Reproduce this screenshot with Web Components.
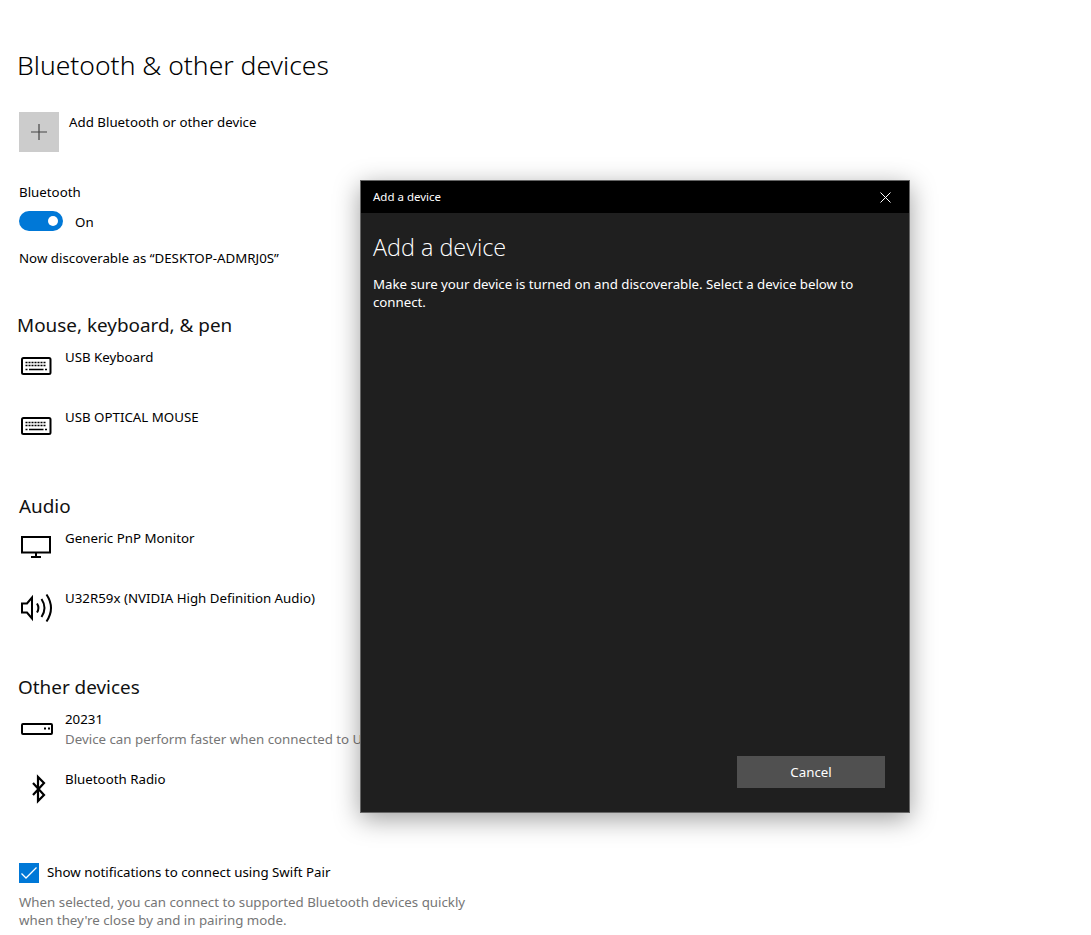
<!DOCTYPE html>
<html lang="en"><head><meta charset="utf-8"><title>Bluetooth &amp; other devices</title>
<style>
html,body{margin:0;background:#fff}
body{width:1091px;height:935px;overflow:hidden;position:relative;font:13.3px/20px "Noto Sans","Open Sans",sans-serif;color:#000}
</style></head>
<body>
<settings-page>
  <page-title>Bluetooth &amp; other devices</page-title>
  <add-device>Add Bluetooth or other device</add-device>
  <bt-toggle></bt-toggle>
  <device-section label="Mouse, keyboard, &amp; pen" inset="17">
    <device-row icon="keyboard">USB Keyboard</device-row>
    <device-row icon="keyboard">USB OPTICAL MOUSE</device-row>
  </device-section>
  <device-section label="Audio" inset="19">
    <device-row icon="monitor">Generic PnP Monitor</device-row>
    <device-row icon="speaker">U32R59x (NVIDIA High Definition Audio)</device-row>
  </device-section>
  <device-section label="Other devices" inset="18">
    <device-row icon="drive" note="Device can perform faster when connected to USB 3.0">20231</device-row>
    <device-row icon="bluetooth">Bluetooth Radio</device-row>
  </device-section>
  <swift-pair></swift-pair>
</settings-page>
<add-dialog></add-dialog>
<script>
function el(name, css, html, extra){
  const t=document.createElement('template');
  t.innerHTML='<style>'+css+'</style>'+html;
  customElements.define(name, class extends HTMLElement{
    constructor(){super();this.attachShadow({mode:'open'}).appendChild(t.content.cloneNode(true));}
    connectedCallback(){ if(extra) extra.call(this,this.shadowRoot); }
  });
}
el('settings-page',':host{display:flex;flex-direction:column;padding-top:48px}','<slot></slot>');
el('page-title',':host{display:block;padding-left:17px;height:34px;font:300 26.5px/34px "Noto Sans",sans-serif;color:#000}','<slot></slot>');
el('add-device',`:host{display:flex;gap:10px;margin:30px 0 0 19px;height:40px}
.b{width:40px;height:40px;background:#ccc;display:flex;align-items:center;justify-content:center}
.t{line-height:20px}`,
`<div class="b"><svg width="16" height="16" viewBox="0 0 16 16"><path d="M8 0v16M0 8h16" stroke="#444" stroke-width="1.2" fill="none"/></svg></div><div class="t"><slot></slot></div>`);
el('bt-toggle',`:host{display:block;margin-top:30px;padding:0 0 18px 19px}
.l{height:20px}
.r{display:flex;align-items:center;gap:12px;margin-top:9px;height:20px}
.r span{position:relative;top:1px}
.s{width:44px;height:20px;border-radius:10px;background:#0078d7;position:relative}
.s i{position:absolute;right:5px;top:5px;width:10px;height:10px;border-radius:50%;background:#fff}
.d{margin-top:17px;height:20px}`,
`<div class="l">Bluetooth</div><div class="r"><div class="s"><i></i></div><span>On</span></div><div class="d">Now discoverable as “DESKTOP-ADMRJ0S”</div>`);
el('device-section',`:host{display:block;margin-top:23px;height:158px}
.h{font:400 18.9px/32px "Noto Sans",sans-serif;height:32px;margin-bottom:6px;color:#111}`,
`<div class="h"></div><slot></slot>`,
function(r){const h=r.querySelector('.h');h.textContent=this.getAttribute('label');h.style.paddingLeft=this.getAttribute('inset')+'px';});
const ICONS={
keyboard:`<rect x="3" y="11" width="28.5" height="16" rx="1.5" fill="none" stroke="#000" stroke-width="2"/>
<path d="M6.5 15.500h21M6.5 18.500h21" stroke="#000" stroke-width="1.600" stroke-dasharray="2 1" fill="none"/><path d="M6.5 22.500h2M10 22.500h14.500M26 22.500h2" stroke="#000" stroke-width="1.600" fill="none"/>`,
monitor:`<rect x="3" y="9" width="28" height="15.500" fill="none" stroke="#000" stroke-width="2"/><path d="M17 25v3M12 29h10" stroke="#000" stroke-width="2" fill="none"/>`,
speaker:`<path d="M3 15.500h5L13 9.500v21L8 24.500H3z" fill="none" stroke="#000" stroke-width="2"/><path d="M18 15.500q2.800 4.500 0 9M22.500 11q6 9 0 18M27.500 6.500q9 13.500 0 27" fill="none" stroke="#000" stroke-width="2"/>`,
drive:`<rect x="3" y="15" width="30" height="10" rx="1" fill="none" stroke="#000" stroke-width="2"/><path d="M25 19.500h2M29 19.500h2" stroke="#000" stroke-width="2" fill="none"/>`,
bluetooth:`<path d="M14 14l11 12-6 6V8l6 6-11 12" fill="none" stroke="#000" stroke-width="2.200"/>`
};
el('device-row',`:host{display:flex;height:60px;padding-left:19px}
svg{width:46px;height:40px;flex:none;display:block}
.n{height:20px}.s{color:#767676;white-space:nowrap;height:20px}`,
`<svg viewBox="0 0 46 40"></svg><div><div class="n"><slot></slot></div><div class="s"></div></div>`,
function(r){r.querySelector('svg').innerHTML=ICONS[this.getAttribute('icon')];r.querySelector('.s').textContent=this.getAttribute('note')||'';});
el('swift-pair',`:host{display:block;margin-top:34px;padding-left:19px}
.c{display:flex;gap:8px;height:20px;line-height:18px}
.b{width:20px;height:20px;background:#0078d7;display:block}
p{margin:10px 0 0;color:#767676;line-height:18px;width:452px}`,
`<div class="c"><svg class="b" viewBox="0 0 20 20"><path d="M2.500 10.500l4.500 4.500L17.500 4.500" fill="none" stroke="#fff" stroke-width="1.300"/></svg><span>Show notifications to connect using Swift Pair</span></div><p>When selected, you can connect to supported Bluetooth devices quickly when they're close by and in pairing mode.</p>`);
el('add-dialog',`:host{position:absolute;left:360px;top:180px;width:548px;height:631px;border:1px solid #666;background:#1f1f1f;color:#fff;display:flex;flex-direction:column;box-shadow:0 6px 24px rgba(0,0,0,.38)}
.bar{height:32px;background:#000;display:flex;align-items:center;justify-content:space-between;padding:0 18px 0 12px;font-size:11.500px}
.body{flex:1;padding:16px 24px 24px 12px;display:flex;flex-direction:column}
h1{margin:0;font:300 23.400px/36px "Open Sans",sans-serif}
p{margin:10px 0 0;line-height:18px;width:490px;letter-spacing:-.03px}
.f{margin-top:auto;display:flex;justify-content:flex-end}
button{width:148px;height:32px;background:#505050;color:#fff;border:0;font:13.300px "Noto Sans",sans-serif;padding:0}`,
`<div class="bar"><span>Add a device</span><svg width="11" height="11" viewBox="0 0 11 11"><path d="M.5.500l10 10M10.500.500l-10 10" stroke="#fff" fill="none"/></svg></div>
<div class="body"><h1>Add a device</h1><p>Make sure your device is turned on and discoverable. Select a device below to connect.</p><div class="f"><button>Cancel</button></div></div>`);
</script>
</body></html>
